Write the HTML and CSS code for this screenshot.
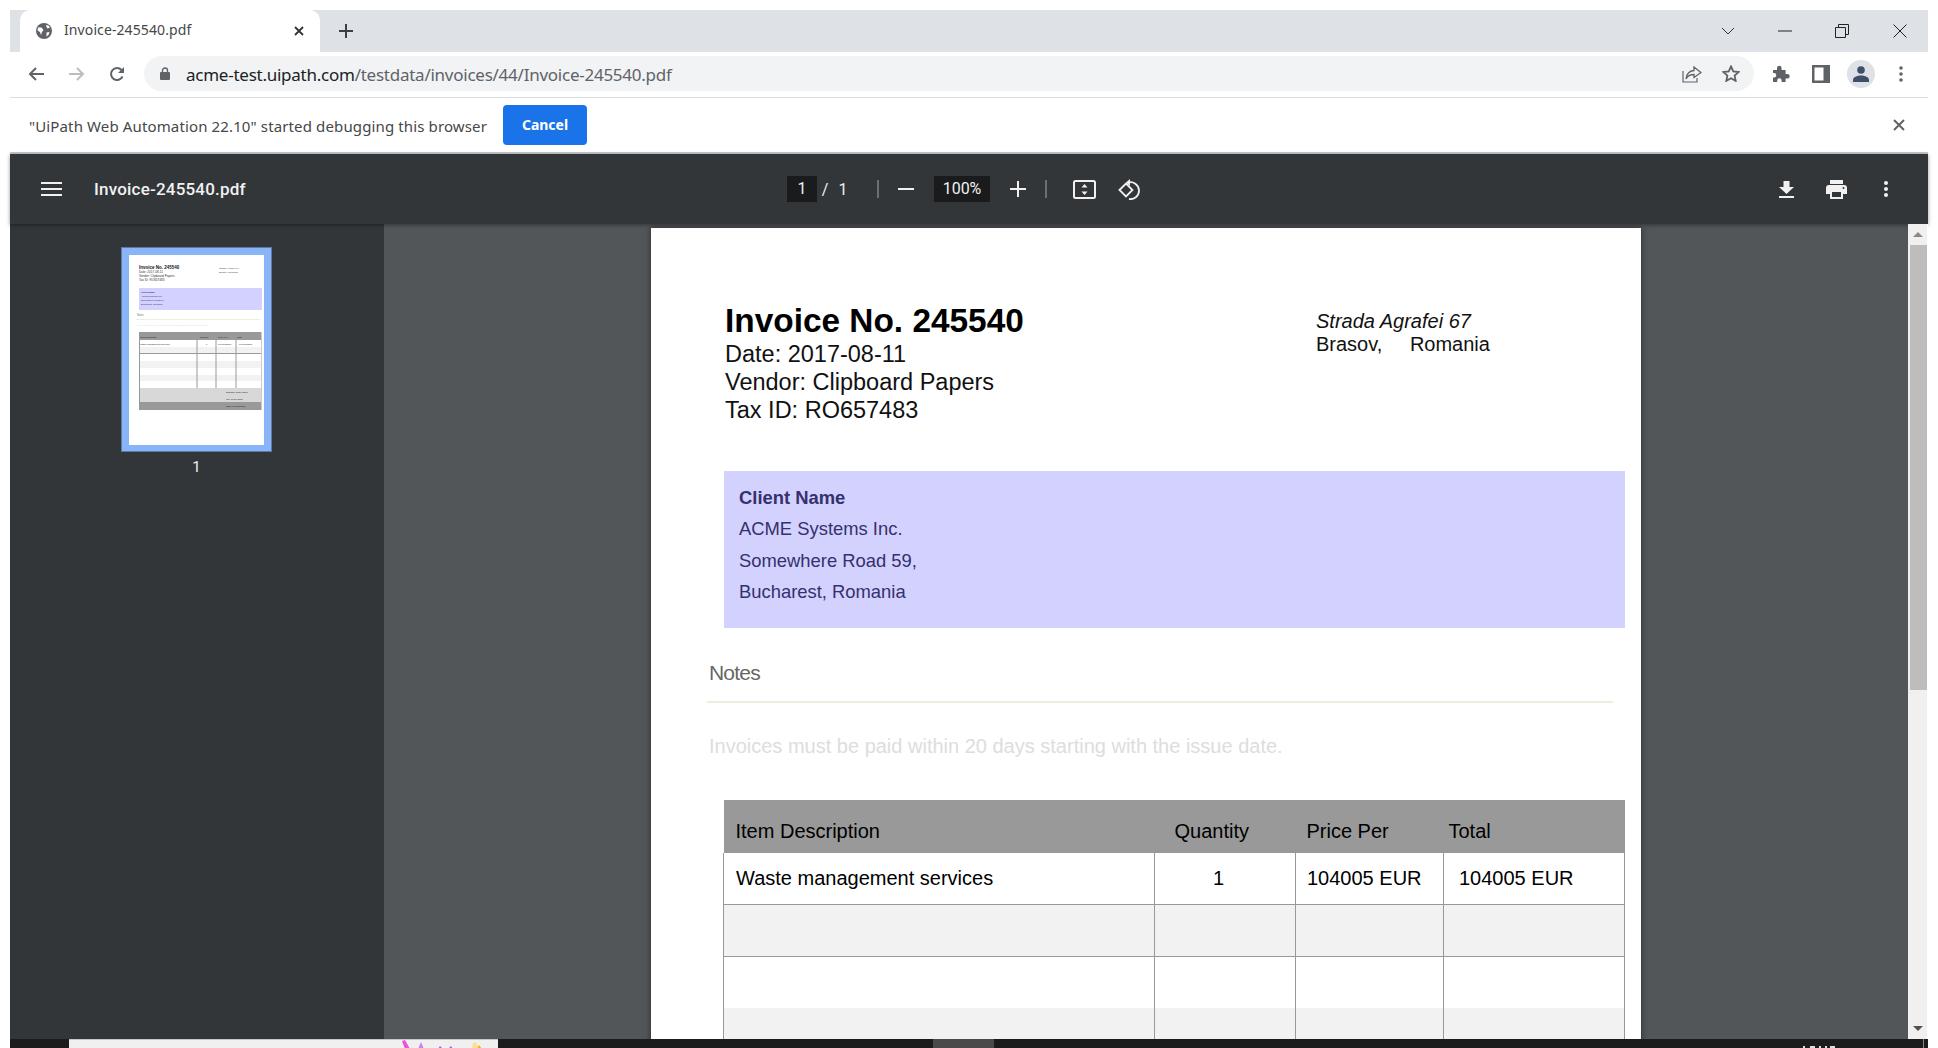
FILE: index.html
```html
<!DOCTYPE html>
<html lang="en">
<head>
    <meta charset="UTF-8">
    <meta name="viewport" content="width=device-width, initial-scale=1">
    <title>Invoice-245540.pdf</title>
    <link rel="stylesheet" href="styles.css">
</head>
<body>
<div class="window">
    <div class="tabstrip">
        <div class="tab">
            <svg class="favicon" width="16" height="16" viewBox="0 0 16 16"><circle cx="8" cy="8" r="8" fill="#5f6368"/><path d="M2 4.500l3.500 0 2 2.500-1.500 2-1 3-1-3L1.500 7.500zM10 2l2.500.5 1.500 2-2.500 1-1-1.500zM10.500 9.500l3-.5-1 3-2 1.500z" fill="#fff"/></svg>
            <span class="tab-title">Invoice-245540.pdf</span>
            <svg class="tab-close" width="10" height="10" viewBox="0 0 10 10"><path d="M1 1l8 8M9 1l-8 8" stroke="#333" stroke-width="1.800"/></svg>
        </div>
        <svg class="new-tab" width="14" height="14" viewBox="0 0 14 14"><path d="M7 0v14M0 7h14" stroke="#3c4043" stroke-width="2"/></svg>
        <div class="window-btns">
            <svg class="win-chevron" width="14" height="8" viewBox="0 0 14 8"><path d="M1 1l6 6 6-6" fill="none" stroke="#333"/></svg>
            <svg class="win-min" width="14" height="2" viewBox="0 0 14 2"><path d="M0 1h14" stroke="#222"/></svg>
            <svg class="win-restore" width="14" height="14" viewBox="0 0 14 14"><path d="M.5 3.500h10v10H.5zM3.500 3.500v-3h10v10h-3" fill="none" stroke="#222"/></svg>
            <svg class="win-close" width="14" height="14" viewBox="0 0 14 14"><path d="M.5.5l13 13M13.500.5l-13 13" stroke="#222"/></svg>
        </div>
    </div>

    <div class="toolbar">
        <svg class="nav-btn nav-back" width="16" height="16" viewBox="0 0 16 16"><path d="M16 8H2M8 2L2 8l6 6" fill="none" stroke="#5f6368" stroke-width="2"/></svg>
        <svg class="nav-btn" width="16" height="16" viewBox="0 0 16 16"><path d="M0 8h14M8 2l6 6-6 6" fill="none" stroke="#bcbec2" stroke-width="2"/></svg>
        <svg class="nav-btn" width="16" height="16" viewBox="0 0 16 16"><path d="M13.500 10.500A6 6 0 1 1 12.500 4" fill="none" stroke="#5f6368" stroke-width="2"/><path d="M15 1v6H9z" fill="#5f6368"/></svg>
        <div class="omnibox">
            <svg class="lock" width="10" height="13" viewBox="0 0 10 13"><path d="M2.500 5V3.500a2.500 2.500 0 0 1 5 0V5" fill="none" stroke="#5f6368" stroke-width="1.400"/><rect y="5" width="10" height="8" rx="1" fill="#5f6368"/></svg>
            <span class="url"><span class="url-host">acme-test.uipath.com</span>/testdata/invoices/44/Invoice-245540.pdf</span>
            <svg class="omni-share" width="20" height="18" viewBox="0 0 20 18"><path d="M1 6v11h14v-4" fill="none" stroke="#5f6368" stroke-width="1.200"/><path d="M12 2l7 5.500-7 5V9.500C8 9.500 5.500 11 4 14c.5-5 3-8 8-8.500z" fill="none" stroke="#5f6368" stroke-width="1.300"/></svg>
            <svg class="omni-star" width="18" height="17" viewBox="0 0 18 17"><path d="M9 1.500l2.300 5 5.200.6-3.900 3.500 1.100 5.300L9 13.200l-4.700 2.700 1.100-5.300L1.500 7.100l5.200-.6z" fill="none" stroke="#5f6368" stroke-width="1.800"/></svg>
        </div>
        <svg class="ext-icon" width="18" height="18" viewBox="0 0 18 18"><path d="M1 5h4V3a2.300 2.300 0 0 1 4.600 0v2h4v4h1.800a2.300 2.300 0 0 1 0 4.600h-1.800V17h-4v-1.500a2.200 2.200 0 0 0-4.400 0V17H1v-4.500h1a2.300 2.300 0 0 0 0-4.600H1z" fill="#5f6368"/></svg>
        <svg class="panel-icon" width="18" height="18" viewBox="0 0 18 18"><rect width="18" height="18" fill="#5f6368"/><rect x="2.500" y="2.500" width="9" height="13" fill="#fff"/></svg>
        <div class="avatar">
            <svg width="16" height="16" viewBox="0 0 16 16"><circle cx="8" cy="4" r="3.800" fill="#3f4f6b"/><path d="M0 16v-2c0-3 4-4.500 8-4.500s8 1.500 8 4.500v2z" fill="#3f4f6b"/></svg>
        </div>
        <svg class="menu-dots" width="4" height="16" viewBox="0 0 4 16"><circle cx="2" cy="2" r="1.800" fill="#5f6368"/><circle cx="2" cy="8" r="1.800" fill="#5f6368"/><circle cx="2" cy="14" r="1.800" fill="#5f6368"/></svg>
    </div>

    <div class="infobar">
        <span class="info-text">"UiPath Web Automation 22.10" started debugging this browser</span>
        <button class="cancel-btn">Cancel</button>
        <svg class="info-close" width="12" height="12" viewBox="0 0 12 12"><path d="M1 1l10 10M11 1L1 11" stroke="#5f6368" stroke-width="2"/></svg>
    </div>

    <div class="viewer">
        <div class="pdf-toolbar">
            <svg class="hamburger" width="21" height="14" viewBox="0 0 21 14"><path d="M0 1h21M0 7h21M0 13h21" stroke="#f1f1f1" stroke-width="2"/></svg>
            <span class="pdf-title">Invoice-245540.pdf</span>
            <span class="page-box">1</span>
            <span class="page-sep">/</span>
            <span class="page-total">1</span>
            <span class="tool-sep sep-a"></span>
            <svg class="zoom-minus" width="16" height="2" viewBox="0 0 16 2"><path d="M0 1h16" stroke="#f1f1f1" stroke-width="2"/></svg>
            <span class="zoom-box">100%</span>
            <svg class="zoom-plus" width="16" height="16" viewBox="0 0 16 16"><path d="M0 8h16M8 0v16" stroke="#f1f1f1" stroke-width="2"/></svg>
            <span class="tool-sep sep-b"></span>
            <svg class="fit-icon" width="23" height="19" viewBox="0 0 23 19"><rect x="1" y="1" width="21" height="17" rx="1.500" fill="none" stroke="#f1f1f1" stroke-width="2"/><path d="M11.500 4l3 3.500h-6zM11.500 15l3-3.500h-6z" fill="#f1f1f1"/></svg>
            <svg class="rotate-icon" width="23" height="21" viewBox="0 0 23 21"><path d="M1.500 11L8 4.500l6.500 6.500L8 17.500z" fill="none" stroke="#f1f1f1" stroke-width="1.800"/><path d="M10 3.500a8.500 8.500 0 1 1 1 16.500" fill="none" stroke="#f1f1f1" stroke-width="1.800"/><path d="M12 0l-4 3.500 4 3.500z" fill="#f1f1f1"/></svg>
            <svg class="dl-icon" width="15" height="17" viewBox="0 0 15 17"><path d="M4.500 0h6v6H15l-7.500 7L0 6h4.500zM0 15h15v2H0z" fill="#f1f1f1"/></svg>
            <svg class="print-icon" width="21" height="19" viewBox="0 0 21 19"><path d="M4 0h13v4H4z" fill="#f1f1f1"/><path d="M3 5h15a3 3 0 0 1 3 3v6h-4v5H4v-5H0V8a3 3 0 0 1 3-3zM6 12v5h9v-5z" fill="#f1f1f1" fill-rule="evenodd"/><circle cx="17.500" cy="8" r="1" fill="#323639"/></svg>
            <svg class="pdf-dots" width="4" height="16" viewBox="0 0 4 16"><circle cx="2" cy="2" r="2" fill="#f1f1f1"/><circle cx="2" cy="8" r="2" fill="#f1f1f1"/><circle cx="2" cy="14" r="2" fill="#f1f1f1"/></svg>
        </div>

        <div class="pdf-body">
            <div class="sidebar">
                <div class="thumb">
                    <svg class="thumb-page" width="135" height="190" viewBox="0 0 135 190" font-family="Liberation Sans, sans-serif">
                        <rect width="135" height="190" fill="#fff"/>
                        <text x="10" y="14" font-size="4.500" font-weight="700" fill="#111">Invoice No. 245540</text>
                        <text x="10" y="17.500" font-size="3.100" fill="#333">Date: 2017-08-11</text>
                        <text x="10" y="21.800" font-size="3.100" fill="#333">Vendor: Clipboard Papers</text>
                        <text x="10" y="25.800" font-size="3.100" fill="#333">Tax ID: RO657483</text>
                        <text x="90" y="14" font-size="2.500" fill="#444">Strada Agrafei 67</text>
                        <text x="90" y="17.500" font-size="2.500" fill="#444">Brasov, Romania</text>
                        <rect x="10" y="33" width="123" height="22" fill="#d3d1fd"/>
                        <g font-size="2.400" fill="#35306e">
                            <text x="12" y="37.500" font-weight="700">Client Name</text>
                            <text x="12" y="42">ACME Systems Inc.</text>
                            <text x="12" y="46">Somewhere Road 59,</text>
                            <text x="12" y="50">Bucharest, Romania</text>
                        </g>
                        <text x="8" y="61" font-size="2.600" fill="#777">Notes</text>
                        <rect x="7" y="64" width="124" height="1" fill="#eeeee0"/>
                        <text x="8" y="71" font-size="2.500" fill="#ddd">Invoices must be paid within 20 days starting with the issue date.</text>
                        <rect x="10" y="77" width="122.500" height="78" fill="#999"/>
                        <rect x="11" y="85" width="121" height="48" fill="#fff"/>
                        <rect x="11" y="92" width="121" height="6" fill="#f2f2f2"/>
                        <rect x="11" y="106" width="121" height="7" fill="#f2f2f2"/>
                        <rect x="11" y="120" width="121" height="6" fill="#f2f2f2"/>
                        <rect x="11" y="98" width="121" height="1" fill="#999"/>
                        <rect x="67.500" y="85" width="1" height="48" fill="#999"/>
                        <rect x="86.500" y="85" width="1" height="48" fill="#999"/>
                        <rect x="106.500" y="85" width="1" height="48" fill="#999"/>
                        <rect x="11" y="133" width="121" height="14" fill="#d8d8d8"/>
                        <g font-size="2.300" fill="#222">
                            <text x="11" y="83">Item Description</text>
                            <text x="71" y="83">Quantity</text>
                            <text x="89" y="83">Price Per</text>
                            <text x="108" y="83">Total</text>
                            <text x="11" y="90">Waste management services</text>
                            <text x="77" y="90">1</text>
                            <text x="89" y="90">104005 EUR</text>
                            <text x="110" y="90">104005 EUR</text>
                            <text x="97" y="138">Subtotal: 87399 EUR</text>
                            <text x="97" y="145">Tax: 16606 EUR</text>
                            <text x="97" y="152">Total: 104005 EUR</text>
                        </g>
                    </svg>
                </div>
                <div class="thumb-num">1</div>
            </div>

            <div class="main">
                <div class="page">
                    <div class="inv-head">
                        <div class="inv-left">
                            <h1>Invoice No. 245540</h1>
                            <p>Date: 2017-08-11</p>
                            <p>Vendor: Clipboard Papers</p>
                            <p>Tax ID: RO657483</p>
                        </div>
                        <div class="inv-addr">
                            <em>Strada Agrafei 67</em><br>
                            Brasov, <span class="addr-gap">Romania</span>
                        </div>
                    </div>

                    <div class="client">
                        <b>Client Name</b><br>
                        ACME Systems Inc.<br>
                        Somewhere Road 59,<br>
                        Bucharest, Romania
                    </div>

                    <h3 class="notes-head">Notes</h3>
                    <p class="notes-text">Invoices must be paid within 20 days starting with the issue date.</p>

                    <table class="items">
                        <colgroup>
                            <col class="col-desc"><col class="col-qty"><col class="col-price"><col class="col-total">
                        </colgroup>
                        <tr class="head-row">
                            <th>Item Description</th>
                            <th class="th-qty">Quantity</th>
                            <th class="th-price">Price Per</th>
                            <th class="th-total">Total</th>
                        </tr>
                        <tr class="lined first-row">
                            <td>Waste management services</td>
                            <td class="td-qty">1</td>
                            <td class="td-price">104005 EUR</td>
                            <td class="td-total">104005 EUR</td>
                        </tr>
                        <tr class="alt lined"><td></td><td></td><td></td><td></td></tr>
                        <tr><td></td><td></td><td></td><td></td></tr>
                        <tr class="alt"><td></td><td></td><td></td><td></td></tr>
                    </table>
                </div>
            </div>

            <div class="scrollbar">
                <span class="arrow-up"></span>
                <div class="scroll-thumb"></div>
                <span class="arrow-down"></span>
            </div>
        </div>
    </div>

    <div class="taskbar">
        <div class="task-window">
            <svg class="task-art" width="90" height="9" viewBox="0 0 90 9"><path d="M0 1l3-1 5 9H3z" fill="#f050d8"/><path d="M16 9l3-7 3 7z" fill="#d080f0"/><path d="M36 9l2-3 3 3zM46 9l3-3 2 3z" fill="#b060d8"/><path d="M70 9l1-6 3-1 3 7z" fill="#ffe08a"/><path d="M75 9l2-4 3 4z" fill="#f8b020"/></svg>
        </div>
        <div class="task-active"></div>
        <!-- only the top edge of the clock shows at the bottom of the shot -->
        <svg class="clock-tops" width="32" height="2" viewBox="0 0 32 2"><path d="M0 0h2v2H0zM7 0h5v2H7zM16 0h2v2h-2zM22 0h2v2h-2zM27 0h5v2h-5z" fill="#ddd"/></svg>
        <span class="task-edge"></span>
    </div>
</div>
</body>
</html>
```

FILE: styles.css
```css
* {
    box-sizing: border-box;
}
html, body {
    margin: 0;
    height: 100%;
    overflow: hidden;
    background-color: white;
}
.window {
    height: 1048px;
    padding: 10px 10px 0 10px;
    display: flex;
    flex-direction: column;
    font-family: "Noto Sans", sans-serif;
}

/* tab strip */
.tabstrip {
    height: 42px;
    flex: none;
    background-color: #dee1e6;
    display: flex;
    align-items: center;
}
.tab {
    width: 300px;
    height: 42px;
    margin-left: 10px;
    background-color: white;
    border-radius: 10px 10px 0 0;
    display: flex;
    align-items: center;
    padding: 0 16px;
}
.tab-title {
    margin-left: 12px;
    margin-bottom: 4px;
    font-size: 14px;
    color: #45474a;
    flex: 1;
    letter-spacing: .1px;
}
.new-tab {
    margin-left: 19px;
}
.window-btns {
    margin-left: auto;
    display: flex;
    align-items: center;
    padding-right: 21px;
}
.win-min {
    margin-left: 43px;
}
.win-restore {
    margin-left: 43px;
}
.win-close {
    margin-left: 44px;
}

/* address bar */
.toolbar {
    height: 46px;
    flex: none;
    border-bottom: 1px solid #dadce0;
    display: flex;
    align-items: center;
    padding: 0 0 2px 18px;
}
.nav-btn {
    margin-right: 24px;
}
.nav-back {
    margin-right: 25px;
}
.omnibox {
    width: 1610px;
    height: 35px;
    margin-left: -5px;
    background-color: #f1f3f4;
    border-radius: 18px;
    display: flex;
    align-items: center;
    padding-left: 16px;
}
.url {
    margin-left: 16px;
    margin-top: 1px;
    font-size: 17px;
    color: #5f6368;
    flex: 1;
    letter-spacing: -.25px;
}
.url-host {
    color: #202124;
}
.omni-star {
    margin-left: 20px;
    margin-right: 14px;
}
.ext-icon {
    margin-left: 18px;
}
.panel-icon {
    margin-left: 22px;
}
.avatar {
    width: 28px;
    height: 28px;
    margin-left: 17px;
    border-radius: 50%;
    background-color: #dee1e6;
    display: flex;
    align-items: center;
    justify-content: center;
}
.menu-dots {
    margin-left: 24px;
}

/* debugging bar */
.infobar {
    height: 56px;
    flex: none;
    border-bottom: 2px solid #c8c8c8;
    display: flex;
    align-items: center;
    padding: 0 23px 1px 19px;
}
.info-text {
    margin-top: 2px;
    font-size: 15px;
    color: #45474a;
    letter-spacing: .13px;
}
.cancel-btn {
    width: 84px;
    height: 40px;
    margin-left: 16px;
    background-color: #1a73e8;
    color: white;
    border: 0;
    border-radius: 4px;
    font-family: "Noto Sans", sans-serif;
    font-size: 14px;
    font-weight: 700;
    padding: 0;
}
.info-close {
    margin-left: auto;
}

/* pdf viewer */
.viewer {
    flex: 1;
    min-height: 0;
    display: flex;
    flex-direction: column;
}
.pdf-toolbar {
    height: 70px;
    flex: none;
    background-color: #323639;
    color: #f1f1f1;
    display: flex;
    align-items: center;
    font-family: Roboto, sans-serif;
    box-shadow: 0 1px 4px rgba(0, 0, 0, .4);
    position: relative;
}
.hamburger {
    margin-left: 31px;
}
.pdf-title {
    width: 693px;
    margin-left: 32px;
    font-size: 17px;
    font-weight: 500;
    letter-spacing: .2px;
}
.page-box {
    width: 30px;
    height: 26px;
    background-color: #191b1c;
    font-size: 16px;
    line-height: 26px;
    text-align: center;
}
.page-sep {
    width: 16px;
    text-align: center;
    font-size: 16px;
}
.page-total {
    width: 10px;
    margin-left: 5px;
    font-size: 16px;
    text-align: center;
}
.tool-sep {
    width: 2px;
    height: 18px;
    background-color: #6c7073;
}
.sep-a {
    margin-left: 29px;
}
.zoom-minus {
    margin-left: 19px;
}
.zoom-box {
    width: 56px;
    height: 26px;
    margin-left: 20px;
    background-color: #191b1c;
    font-size: 16px;
    line-height: 25px;
    text-align: center;
}
.zoom-plus {
    margin-left: 20px;
}
.sep-b {
    margin-left: 19px;
}
.fit-icon {
    margin-left: 26px;
}
.rotate-icon {
    margin-left: 22px;
}
.dl-icon {
    margin-left: auto;
}
.print-icon {
    margin-left: 32px;
}
.pdf-dots {
    margin-left: 37px;
    margin-right: 40px;
}
.pdf-body {
    flex: 1;
    min-height: 0;
    display: flex;
}
.sidebar {
    width: 374px;
    flex: none;
    background-color: #323639;
    padding-top: 23px;
}
.thumb {
    width: 151px;
    height: 205px;
    margin-left: 111px;
    background-color: #8ab4f8;
    border: 1px solid #5d79a6;
    padding: 7px;
}
.thumb-page {
    display: block;
}
.thumb-num {
    width: 151px;
    margin-left: 111px;
    margin-top: 6px;
    text-align: center;
    color: #f1f1f1;
    font-family: Roboto, sans-serif;
    font-size: 15px;
}
.main {
    flex: 1;
    min-width: 0;
    background-color: #525659;
    display: flex;
    justify-content: center;
    overflow: hidden;
    padding-top: 4px;
}

/* invoice page */
.page {
    width: 990px;
    flex: none;
    height: 1400px;
    background-color: white;
    font-family: "Liberation Sans", Arial, sans-serif;
    padding-top: 74px;
    box-shadow: 0 0 6px rgba(0, 0, 0, .5);
}
.inv-head {
    display: flex;
    padding-left: 74px;
}
.inv-left {
    width: 591px;
}
.inv-left h1 {
    margin: 0;
    font-size: 33.400px;
    line-height: 38px;
    color: black;
}
.inv-left p {
    margin: 0;
    font-size: 23.500px;
    line-height: 28px;
    color: #111;
}
.inv-addr {
    margin-top: 8px;
    font-size: 20px;
    line-height: 23px;
    color: #111;
}
.addr-gap {
    margin-left: 22px;
}
.client {
    width: 901px;
    height: 157px;
    margin: 47px 0 0 73px;
    padding: 11px 0 0 15px;
    background-color: #d3d1fd;
    color: #35306e;
    font-size: 18.400px;
    line-height: 31.400px;
}
.notes-head {
    margin: 31px 0 0 56px;
    width: 906px;
    height: 44px;
    padding-left: 2px;
    border-bottom: 2px solid #eeeee0;
    font-size: 21px;
    font-weight: 400;
    line-height: 28px;
    color: #666;
    letter-spacing: -.8px;
}
.notes-text {
    margin: 31px 0 0 58px;
    font-size: 20px;
    line-height: 24px;
    color: #ddd;
}
.items {
    width: 901px;
    margin: 42px 0 0 72px;
    border-collapse: collapse;
    table-layout: fixed;
    font-size: 20px;
    color: black;
}
.col-desc {
    width: 431px;
}
.col-qty {
    width: 141px;
}
.col-price {
    width: 148px;
}
.col-total {
    width: 181px;
}
.head-row th {
    height: 53px;
    background-color: #999;
    font-weight: 400;
    text-align: left;
    padding: 9px 0 0 12px;
}
.items .th-qty {
    padding-left: 20px;
}
.items .th-price {
    padding-left: 11px;
}
.items .th-total {
    padding-left: 5px;
}
.items td {
    height: 52px;
    padding: 0 0 0 12px;
    border-left: 1px solid #999;
    border-right: 1px solid #999;
}
.items .first-row td {
    height: 51px;
}
.items .td-qty {
    padding-left: 58px;
}
.items .td-price {
    padding-left: 11px;
}
.items .td-total {
    padding-left: 15px;
}
.lined td {
    border-bottom: 1px solid #999;
}
.alt td {
    background-color: #f2f2f2;
}

/* scrollbar */
.scrollbar {
    width: 20px;
    flex: none;
    background-color: #f0f0f0;
    border-right: 1px solid white;
    padding-left: 2px;
    position: relative;
}
.scroll-thumb {
    width: 17px;
    height: 445px;
    margin-top: 21px;
    background-color: #bdbdbd;
}
.arrow-up, .arrow-down {
    position: absolute;
    left: 5px;
    width: 0;
    height: 0;
    border-left: 5px solid transparent;
    border-right: 5px solid transparent;
}
.arrow-up {
    top: 8px;
    border-bottom: 5px solid #8a8a8a;
}
.arrow-down {
    bottom: 8px;
    border-top: 5px solid #505050;
}

/* taskbar */
.taskbar {
    height: 9px;
    flex: none;
    background-color: #1c1c1c;
    display: flex;
    overflow: hidden;
}
.task-window {
    width: 429px;
    height: 9px;
    margin-left: 59px;
    background-color: #f0f0f0;
    border-top: 1px solid #c8c8c8;
    padding-left: 333px;
}
.task-art {
    display: block;
}
.task-active {
    width: 61px;
    height: 9px;
    margin-left: 435px;
    background-color: #4a4a4a;
}
.clock-tops {
    margin-left: 809px;
    margin-top: 7px;
}
.task-edge {
    width: 1px;
    margin-left: auto;
    margin-right: 4px;
    background-color: #888;
}
```
